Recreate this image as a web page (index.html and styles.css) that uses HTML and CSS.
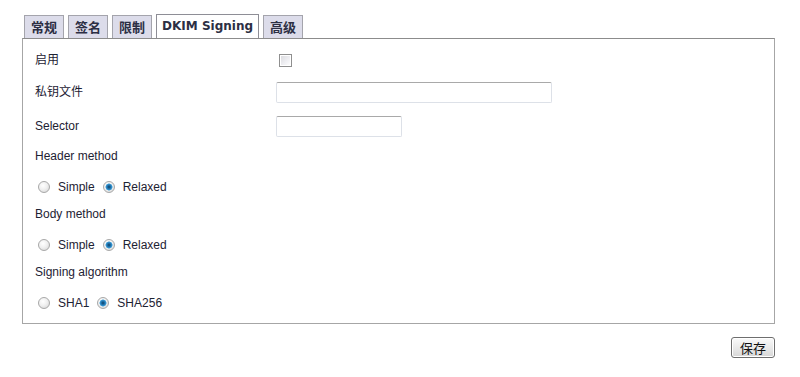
FILE: index.html
```html
<!DOCTYPE html>
<html lang="zh">
<head>
<meta charset="utf-8">
<title>DKIM Signing</title>
<link rel="stylesheet" href="styles.css">
</head>
<body>
<div class="page">
  <div class="tabs">
    <div class="tab cjk">常规</div>
    <div class="tab cjk">签名</div>
    <div class="tab cjk">限制</div>
    <div class="tab active">DKIM Signing</div>
    <div class="tab cjk">高级</div>
  </div>
  <div class="panel">
    <div class="row r1">
      <label class="lbl">启用</label>
      <div class="ctl"><input type="checkbox" class="chk"></div>
    </div>
    <div class="row r2">
      <label class="lbl">私钥文件</label>
      <div class="ctl"><input type="text" class="txt wide"></div>
    </div>
    <div class="row r3">
      <label class="lbl">Selector</label>
      <div class="ctl"><input type="text" class="txt short"></div>
    </div>
    <div class="head">Header method</div>
    <div class="radios">
      <label class="opt"><input type="radio" name="hm" class="rad">Simple</label>
      <label class="opt"><input type="radio" name="hm" class="rad" checked>Relaxed</label>
    </div>
    <div class="head">Body method</div>
    <div class="radios">
      <label class="opt"><input type="radio" name="bm" class="rad">Simple</label>
      <label class="opt"><input type="radio" name="bm" class="rad" checked>Relaxed</label>
    </div>
    <div class="head">Signing algorithm</div>
    <div class="radios">
      <label class="opt"><input type="radio" name="sa" class="rad">SHA1</label>
      <label class="opt"><input type="radio" name="sa" class="rad" checked>SHA256</label>
    </div>
  </div>
  <div class="actions">
    <button class="btn">保存</button>
  </div>
</div>
</body>
</html>
```
FILE: styles.css
```css
html, body {
  margin: 0;
  padding: 0;
  background: #ffffff;
}
body {
  font-family: "Liberation Sans", "Noto Sans CJK SC", sans-serif;
  font-size: 12px;
  color: #1d2233;
}
.page {
  width: 753px;
  padding: 14px 0 0 22px;
}
.tabs {
  display: flex;
  align-items: flex-end;
  gap: 4px;
  padding-left: 2px;
  height: 24px;
}
.tab {
  box-sizing: border-box;
  height: 23px;
  padding: 0 6px;
  border: 1px solid #a4a4ac;
  border-bottom: none;
  background: #dcdcea;
  font-family: "DejaVu Sans", "Noto Sans CJK SC", sans-serif;
  font-weight: bold;
  font-size: 12px;
  line-height: 22px;
  color: #2c2f44;
}
.tab.cjk {
  font-family: "Noto Sans CJK SC", sans-serif;
  font-size: 13px;
}
.tab.active {
  height: 24px;
  background: #ffffff;
  border-color: #8e8e96;
  padding: 0 5px;
  line-height: 23px;
}
.panel {
  border: 1px solid #a6a6a6;
  border-top-color: #8c8c8c;
  padding: 6px 0 7px 12px;
  height: 271px;
  box-sizing: content-box;
}
.row {
  display: grid;
  grid-template-columns: 241px 1fr;
  align-items: center;
  height: 30px;
}
.r2 { margin-top: 2px; }
.r3 { margin-top: 4px; }
.lbl { line-height: 30px; }
.ctl { display: flex; align-items: center; }
.chk {
  appearance: none;
  -webkit-appearance: none;
  box-sizing: border-box;
  width: 13px;
  height: 13px;
  margin: 1px 0 0 3px;
  border: 1px solid #8f8f8f;
  background: linear-gradient(135deg, #d8d8dc 0%, #eeeef2 55%, #ffffff 100%);
  box-shadow: inset 0 0 0 1px #ffffff;
}
.txt {
  box-sizing: border-box;
  height: 21px;
  margin: 0;
  padding: 0 4px;
  border: 1px solid #dde1e8;
  border-top-color: #a9a9a9;
  border-radius: 2px;
  background: #ffffff;
  font: inherit;
}
.wide { width: 276px; }
.short { width: 126px; }
.head {
  height: 30px;
  line-height: 30px;
}
.radios {
  display: flex;
  align-items: center;
  gap: 8px;
  height: 25px;
  padding-top: 3px;
  padding-left: 3px;
}
.opt {
  display: flex;
  align-items: center;
  gap: 8px;
}
.rad {
  appearance: none;
  -webkit-appearance: none;
  box-sizing: border-box;
  width: 12px;
  height: 12px;
  margin: 0;
  border-radius: 50%;
  border: 1px solid #a8a8a8;
  background: radial-gradient(circle at 40% 35%, #ffffff 0%, #f0f0f0 45%, #d2d2d2 100%);
}
.rad:checked {
  background:
    radial-gradient(circle at 50% 50%, #0b3f66 0%, #2a86c4 35%, #5ab0e0 48%, transparent 52%),
    radial-gradient(circle at 40% 35%, #ffffff 0%, #f0f0f0 45%, #d2d2d2 100%);
}
.actions {
  display: flex;
  justify-content: flex-end;
  padding-top: 13px;
}
.btn {
  box-sizing: border-box;
  width: 44px;
  height: 21px;
  padding: 0;
  border: 1px solid #6e6e6e;
  border-radius: 3px;
  background: linear-gradient(#fafafa, #e6e6e6 60%, #d6d6d6);
  box-shadow: inset 0 0 0 1px #ffffff;
  font-family: "Noto Sans CJK SC", sans-serif;
  font-size: 13px;
  line-height: 18px;
  color: #111111;
}
```
